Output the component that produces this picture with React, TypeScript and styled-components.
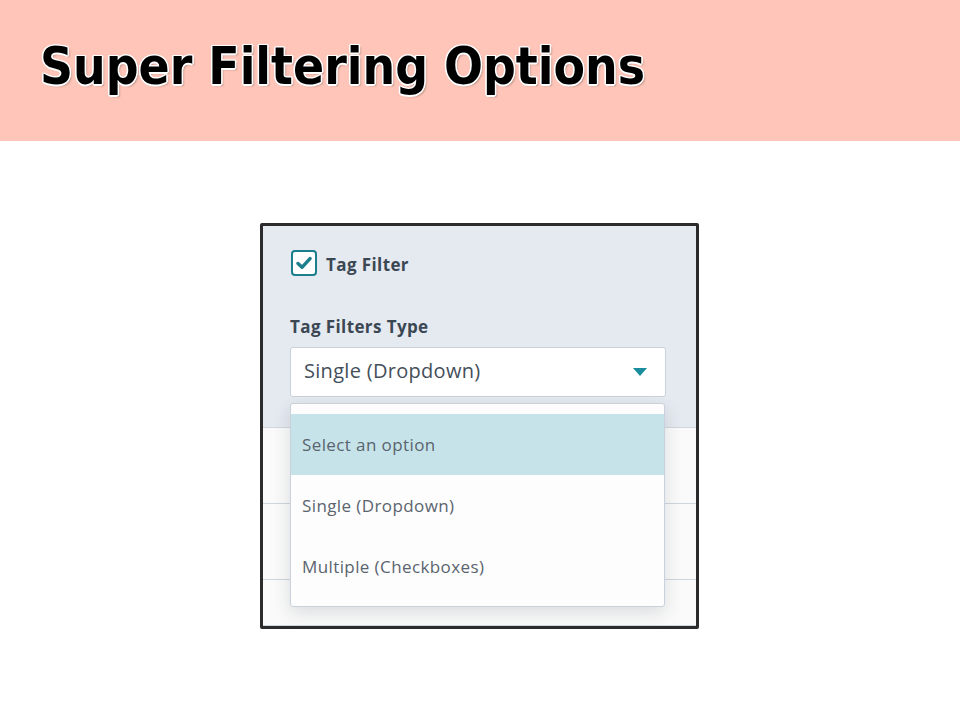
import React from "react";
import styled, { createGlobalStyle } from "styled-components";

const Global = createGlobalStyle`
  html, body { margin: 0; padding: 0; background: #ffffff; }
  body { font-family: "Open Sans", "Noto Sans", sans-serif; }
`;

const Page = styled.div`
  width: 960px;
  height: 720px;
  display: flex;
  flex-direction: column;
  background: #ffffff;
`;

const Banner = styled.header`
  height: 141px;
  background: #fec5b8;
  display: flex;
  align-items: center;
  padding-left: 40px;
  padding-bottom: 8px;
  box-sizing: border-box;
`;

const Title = styled.h1`
  margin: 0;
  font-family: "DejaVu Sans Condensed", "DejaVu Sans", sans-serif;
  font-stretch: condensed;
  font-weight: 700;
  font-size: 51px;
  line-height: 1;
  color: #000;
  text-shadow:
    1.5px 0 0 #fff, -1.5px 0 0 #fff, 0 1.5px 0 #fff, 0 -1.5px 0 #fff,
    1px 1px 0 #fff, -1px -1px 0 #fff, 1px -1px 0 #fff, -1px 1px 0 #fff,
    2px 2px 2px rgba(0, 0, 0, 0.25);
`;

const Stage = styled.main`
  flex: 1;
  display: flex;
  justify-content: flex-start;
  padding-top: 82px;
  padding-left: 260px;
`;

const Panel = styled.section`
  position: relative;
  width: 439px;
  height: 406px;
  box-sizing: border-box;
  border: 3px solid #2b2b2b;
  border-radius: 2px;
  background: #fafafa;
  display: flex;
  flex-direction: column;
  overflow: hidden;
`;

const Settings = styled.div`
  background: #e5e9f0;
  height: 202px;
  box-sizing: border-box;
  padding: 24px 30px 0 27px;
  display: flex;
  flex-direction: column;
  border-bottom: 1px solid #cfd6de;
`;

const CheckRow = styled.label`
  display: flex;
  align-items: center;
  gap: 9px;
  padding-left: 1px;
  height: 26px;
`;

const Box = styled.span`
  width: 26px;
  height: 26px;
  box-sizing: border-box;
  border: 2px solid #1b7f8c;
  border-radius: 4px;
  background: #ffffff;
  display: flex;
  align-items: center;
  justify-content: center;
`;

const CheckText = styled.span`
  padding-top: 3px;
  font-size: 17px;
  line-height: 20px;
  font-weight: 700;
  letter-spacing: 0.4px;
  color: #3b4854;
`;

const FieldLabel = styled.div`
  margin-top: 41px;
  font-size: 17px;
  line-height: 20px;
  font-weight: 700;
  letter-spacing: 0.4px;
  color: #3b4854;
`;

const Select = styled.div`
  margin-top: 10px;
  height: 50px;
  width: 376px;
  box-sizing: border-box;
  background: #ffffff;
  border: 1px solid #c9d2dc;
  border-radius: 3px;
  display: flex;
  align-items: center;
  justify-content: space-between;
  padding: 0 18px 3px 13px;
  font-size: 20px;
  letter-spacing: 0.3px;
  color: #454f5a;
`;

const Caret = styled.svg`
  margin-top: 3px;
`;

const Row = styled.div<{ $h: number }>`
  height: ${(p) => p.$h}px;
  box-sizing: border-box;
  border-bottom: 1px solid #cfd6de;
  background: #fafafa;
  &:last-child { border-bottom: none; }
`;

const Menu = styled.ul`
  position: absolute;
  left: 27px;
  top: 177px;
  width: 375px;
  height: 204px;
  box-sizing: border-box;
  margin: 0;
  padding: 10px 0 0;
  list-style: none;
  background: #fdfdfd;
  border: 1px solid #c9d2dc;
  border-radius: 3px;
  box-shadow: 0 6px 18px rgba(30, 40, 50, 0.14);
`;

const Option = styled.li<{ $active?: boolean }>`
  height: 61px;
  display: flex;
  align-items: center;
  padding-left: 11px;
  font-size: 17px;
  letter-spacing: 0.4px;
  color: #5a646e;
  background: ${(p) => (p.$active ? "#c6e3ea" : "transparent")};
`;

export default function App() {
  return (
    <>
      <Global />
      <Page>
        <Banner>
          <Title>Super Filtering Options</Title>
        </Banner>
        <Stage>
          <Panel>
            <Settings>
              <CheckRow>
                <Box>
                  <svg width="16" height="14" viewBox="0 0 16 14">
                    <path
                      d="M2 7.5 L6 11.3 L14 2.6"
                      fill="none"
                      stroke="#1b7f8c"
                      strokeWidth="3.4"
                      strokeLinecap="round"
                      strokeLinejoin="round"
                    />
                  </svg>
                </Box>
                <CheckText>Tag Filter</CheckText>
              </CheckRow>
              <FieldLabel>Tag Filters Type</FieldLabel>
              <Select>
                <span>Single (Dropdown)</span>
                <Caret width="14" height="8" viewBox="0 0 14 8">
                  <path d="M0 0 H14 L7 8 Z" fill="#1a8c9c" />
                </Caret>
              </Select>
            </Settings>
            <Row $h={76} />
            <Row $h={76} />
            <Row $h={46} />
            <Menu>
              <Option $active>Select an option</Option>
              <Option>Single (Dropdown)</Option>
              <Option>Multiple (Checkboxes)</Option>
            </Menu>
          </Panel>
        </Stage>
      </Page>
    </>
  );
}
